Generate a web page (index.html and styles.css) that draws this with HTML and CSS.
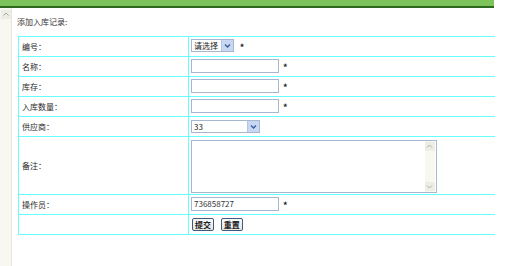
FILE: index.html
```html
<!DOCTYPE html>
<html lang="zh-CN">
<head>
    <meta charset="UTF-8">
    <title>添加入库记录</title>
    <link rel="stylesheet" href="styles.css">
</head>
<body>
    <div class="topbar"></div>
    <div class="frame">
        <div class="side">
            <span class="side-btn">
                <svg width="10" height="9" viewBox="0 0 10 9"><path d="M2.5 5.5 L5 3 L7.5 5.5" fill="none" stroke="#a8a8a0" stroke-width="1"/></svg>
            </span>
        </div>
        <div class="main">
            <div class="title">添加入库记录:</div>
            <form>
                <table class="form-table">
                    <tr>
                        <td class="label">编号：</td>
                        <td>
                            <span class="select">
                                <select><option>请选择</option></select>
                                <span class="select-arrow"><svg width="9" height="9" viewBox="0 0 9 9"><path d="M2 3.5 L4.5 6 L7 3.5" fill="none" stroke="#3a5a9a" stroke-width="1.3"/></svg></span>
                            </span>
                            <span class="req">*</span>
                        </td>
                    </tr>
                    <tr>
                        <td class="label">名称：</td>
                        <td><input type="text" class="text"><span class="req">*</span></td>
                    </tr>
                    <tr>
                        <td class="label">库存：</td>
                        <td><input type="text" class="text"><span class="req">*</span></td>
                    </tr>
                    <tr>
                        <td class="label">入库数量：</td>
                        <td><input type="text" class="text"><span class="req">*</span></td>
                    </tr>
                    <tr>
                        <td class="label">供应商：</td>
                        <td>
                            <span class="select select-wide">
                                <select><option>33</option></select>
                                <span class="select-arrow"><svg width="9" height="9" viewBox="0 0 9 9"><path d="M2 3.5 L4.5 6 L7 3.5" fill="none" stroke="#3a5a9a" stroke-width="1.3"/></svg></span>
                            </span>
                        </td>
                    </tr>
                    <tr class="tall">
                        <td class="label">备注：</td>
                        <td>
                            <span class="memo">
                                <textarea></textarea>
                                <span class="scroll">
                                    <span class="scroll-btn"><svg width="9" height="9" viewBox="0 0 9 9"><path d="M2 5.5 L4.5 3 L7 5.5" fill="none" stroke="#b0b0a8" stroke-width="1"/></svg></span>
                                    <span class="scroll-btn"><svg width="9" height="9" viewBox="0 0 9 9"><path d="M2 3.5 L4.5 6 L7 3.5" fill="none" stroke="#b0b0a8" stroke-width="1"/></svg></span>
                                </span>
                            </span>
                        </td>
                    </tr>
                    <tr>
                        <td class="label">操作员：</td>
                        <td><input type="text" class="text" value="736858727"><span class="req">*</span></td>
                    </tr>
                    <tr>
                        <td class="label"></td>
                        <td>
                            <button type="submit" class="btn">提交</button>
                            <button type="reset" class="btn">重置</button>
                        </td>
                    </tr>
                </table>
            </form>
        </div>
    </div>
</body>
</html>
```

FILE: styles.css
```css
body {
    margin: 0;
    height: 100vh;
    display: flex;
    flex-direction: column;
    font-family: "Noto Sans CJK SC", "Noto Sans", sans-serif;
    font-size: 8px;
    color: #2a2a2a;
    background: #fff;
    overflow: hidden;
}
.topbar {
    width: 494px;
    height: 6px;
    background: #7cc35b;
    border-bottom: 2px solid #2d6a20;
    flex: none;
}
.frame {
    display: flex;
    flex: 1;
}
.side {
    width: 11px;
    background: #f8f8f1;
    border-right: 1px solid #e6e6de;
    padding-top: 2px;
}
.side-btn {
    display: block;
    margin-left: 1px;
    width: 10px;
    height: 9px;
    background: #ececE6;
}
.side-btn svg {
    display: block;
}
.main {
    padding-left: 6px;
    width: 476px;
}
.title {
    height: 28px;
    line-height: 28px;
    color: #333;
    margin-left: -1px;
}
.form-table {
    border-collapse: collapse;
    width: 477px;
}
.form-table td {
    border: 1px solid #66ffff;
    border-right: none;
    height: 19px;
    padding: 0 0 0 2px;
    vertical-align: middle;
    white-space: nowrap;
}
.form-table td.label {
    width: 166px;
    padding-left: 3px;
}
.form-table tr.tall td {
    height: 57px;
}
.text {
    box-sizing: border-box;
    width: 88px;
    height: 14px;
    border: 1px solid #a5b8d0;
    padding: 0 2px;
    font: inherit;
    color: #333;
    vertical-align: middle;
    outline: none;
}
.req {
    display: inline-block;
    margin-left: 4px;
    font-size: 9px;
    font-weight: bold;
    vertical-align: -3px;
    color: #222;
}
.select {
    display: inline-flex;
    box-sizing: border-box;
    width: 43px;
    height: 13px;
    border: 1px solid #a5b8d0;
    background: #fff;
    vertical-align: middle;
}
.select-wide {
    width: 69px;
}
.select select {
    flex: 1;
    min-width: 0;
    -webkit-appearance: none;
    appearance: none;
    border: none;
    background: transparent;
    font: inherit;
    color: #222;
    padding: 0 2px;
    outline: none;
}
.select-arrow {
    width: 11px;
    background: #c9d8f2;
    border-left: 1px solid #b4c6e6;
    display: flex;
    align-items: center;
    justify-content: center;
}
.memo {
    display: inline-flex;
    box-sizing: border-box;
    width: 246px;
    height: 53px;
    border: 1px solid #a5b8d0;
    vertical-align: middle;
    margin-top: 1px;
}
.memo textarea {
    flex: 1;
    border: none;
    resize: none;
    outline: none;
    font: inherit;
    padding: 2px;
}
.scroll {
    width: 10px;
    background: #f8f8f0;
    display: flex;
    flex-direction: column;
    justify-content: space-between;
    padding: 1px 0;
    margin-right: 1px;
}
.scroll-btn {
    height: 9px;
    background: #ededE6;
}
.scroll-btn svg {
    display: block;
}
.btn {
    box-sizing: border-box;
    width: 22px;
    height: 13px;
    padding: 0;
    margin: 0 4px 0 1px;
    border: 1px solid #3e5a7e;
    border-radius: 2px;
    background: linear-gradient(#fafafa, #e6e6e0);
    font: inherit;
    font-weight: bold;
    color: #222;
    vertical-align: middle;
}
```
